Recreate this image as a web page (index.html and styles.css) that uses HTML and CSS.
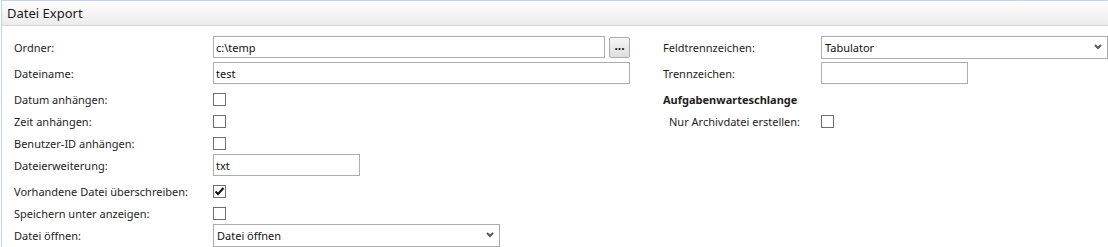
FILE: index.html
```html
<!DOCTYPE html>
<html>
<head>
    <link rel="stylesheet" href="styles.css">
</head>
<body>
    <div class="panel">
        <div class="panel-header">Datei Export</div>

        <div class="panel-body">
            <div class="column column-left">
                <div class="row row-input">
                    <label>Ordner:</label>
                    <div class="field-with-button">
                        <input type="text" class="text-input" value="c:\temp">
                        <button class="browse-button">...</button>
                    </div>
                </div>
                <div class="row row-input">
                    <label>Dateiname:</label>
                    <input type="text" class="text-input input-wide" value="test">
                </div>
                <div class="row">
                    <label>Datum anhängen:</label>
                    <span class="check"></span>
                </div>
                <div class="row">
                    <label>Zeit anhängen:</label>
                    <span class="check"></span>
                </div>
                <div class="row">
                    <label>Benutzer-ID anhängen:</label>
                    <span class="check"></span>
                </div>
                <div class="row row-input">
                    <label>Dateierweiterung:</label>
                    <input type="text" class="text-input input-short" value="txt">
                </div>
                <div class="row">
                    <label>Vorhandene Datei überschreiben:</label>
                    <span class="check">
                        <svg width="11" height="11" viewBox="0 0 11 11">
                            <path d="M1.5 5.5 L4 8 L9.5 2" fill="none" stroke="#111" stroke-width="2"/>
                        </svg>
                    </span>
                </div>
                <div class="row">
                    <label>Speichern unter anzeigen:</label>
                    <span class="check"></span>
                </div>
                <div class="row row-input">
                    <label>Datei öffnen:</label>
                    <div class="combo">
                        <span>Datei öffnen</span>
                        <svg width="8" height="6" viewBox="0 0 8 6">
                            <path d="M1 1 L4 4 L7 1" fill="none" stroke="#5a5a5a" stroke-width="2"/>
                        </svg>
                    </div>
                </div>
            </div>

            <div class="column column-right">
                <div class="row row-input">
                    <label>Feldtrennzeichen:</label>
                    <div class="combo">
                        <span>Tabulator</span>
                        <svg width="8" height="6" viewBox="0 0 8 6">
                            <path d="M1 1 L4 4 L7 1" fill="none" stroke="#5a5a5a" stroke-width="2"/>
                        </svg>
                    </div>
                </div>
                <div class="row row-input">
                    <label>Trennzeichen:</label>
                    <input type="text" class="text-input input-short" value="">
                </div>
                <div class="row">
                    <div class="section-title">Aufgabenwarteschlange</div>
                </div>
                <div class="row">
                    <label class="indented">Nur Archivdatei erstellen:</label>
                    <span class="check"></span>
                </div>
            </div>
        </div>
    </div>
</body>
</html>
```

FILE: styles.css
```css
body {
    margin: 0;
    background-color: white;
    font-family: "Segoe UI", "Noto Sans", sans-serif;
    font-size: 11px;
    color: #1e1e1e;
}

.panel {
    margin-left: 1px;
    border-top: 1px solid #c3d2ea;
    border-left: 1px solid #c3d2ea;
    height: 246px;
    overflow: hidden;
}

.panel-header {
    height: 24px;
    line-height: 25px;
    padding-left: 5px;
    font-size: 13px;
    color: #1b1b1b;
    background: linear-gradient(to bottom, #fdfdfd, #ececec);
    border-bottom: 1px solid #d6d6d6;
}

.panel-body {
    display: flex;
    padding: 10px 0 0 12px;
}

.column-left {
    width: 649px;
    flex-shrink: 0;
}

.column-right {
    flex: 1;
}

.row {
    display: flex;
    align-items: center;
    height: 22px;
}

.row > * {
    flex-shrink: 0;
}

.row-input {
    margin-bottom: 4px;
}

.column-left label {
    width: 199px;
}

.column-right label {
    width: 158px;
}

.column-right label.indented {
    width: 152px;
    padding-left: 6px;
}

.section-title {
    font-weight: bold;
}

.text-input {
    box-sizing: border-box;
    height: 22px;
    padding: 0 2px;
    border: 1px solid #acacac;
    font-family: inherit;
    font-size: 11px;
    color: #111;
    outline: none;
}

.field-with-button {
    display: flex;
    gap: 4px;
    align-items: center;
}

.field-with-button .text-input {
    width: 392px;
}

.browse-button {
    box-sizing: border-box;
    width: 21px;
    height: 21px;
    margin-top: 1px;
    padding: 0 0 3px 0;
    border: 1px solid #acacac;
    border-radius: 2px;
    background: linear-gradient(to bottom, #f6f6f6, #dedede);
    font-family: inherit;
    font-size: 12px;
    font-weight: bold;
    color: #111;
    line-height: 1;
}

.input-wide {
    width: 417px;
}

.input-short {
    width: 147px;
}

.check {
    box-sizing: border-box;
    width: 13px;
    height: 13px;
    border: 1px solid #707070;
    background: white;
    display: flex;
    align-items: center;
    justify-content: center;
}

.combo {
    box-sizing: border-box;
    width: 287px;
    height: 23px;
    padding: 0 5px 0 3px;
    border: 1px solid #acacac;
    display: flex;
    align-items: center;
    justify-content: space-between;
    color: #111;
}
```
